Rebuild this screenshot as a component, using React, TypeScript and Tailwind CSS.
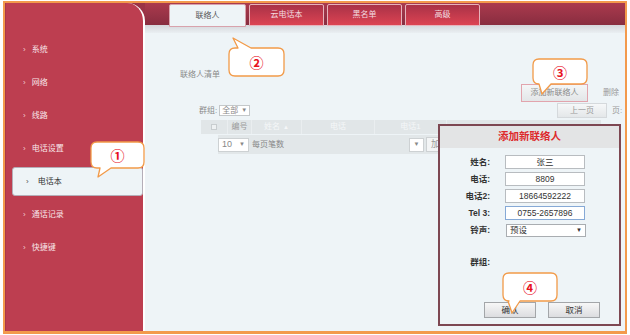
import React from 'react';

const menu = ['系统', '网络', '线路', '电话设置', '电话本', '通话记录', '快捷键'];
const tabs = ['联络人', '云电话本', '黑名单', '高级'];

const fields = [
  { label: '姓名:', value: '张三' },
  { label: '电话:', value: '8809' },
  { label: '电话2:', value: '18664592222' },
  { label: 'Tel 3:', value: '0755-2657896', focus: true },
];

function bubblePath(w: number, h: number, r: number, side: 'top' | 'bottom', b1: number, b2: number, tx: number, ty: number) {
  if (side === 'bottom')
    return `M${r},0 H${w - r} Q${w},0 ${w},${r} V${h - r} Q${w},${h} ${w - r},${h} H${b2} L${tx},${ty} L${b1},${h} H${r} Q0,${h} 0,${h - r} V${r} Q0,0 ${r},0 Z`;
  return `M${r},0 H${b1} L${tx},${ty} L${b2},0 H${w - r} Q${w},0 ${w},${r} V${h - r} Q${w},${h} ${w - r},${h} H${r} Q0,${h} 0,${h - r} V${r} Q0,0 ${r},0 Z`;
}

function Callout({ className, n, d }: { className: string; n: string; d: string }) {
  return (
    <div className={`absolute z-30 flex items-center justify-center ${className}`}>
      <svg className="absolute inset-0 h-full w-full overflow-visible">
        <path d={d} fill="#fff" stroke="#f29a48" strokeWidth="1.3" strokeLinejoin="round" />
      </svg>
      <span className="relative text-[14px] font-bold leading-none text-[#e8101e] font-['Noto_Sans_CJK_SC',sans-serif]">{n}</span>
    </div>
  );
}

export default function App() {
  return (
    <div className="relative h-[335px] w-[630px] overflow-hidden bg-white pl-[3px] pt-[1px] text-[8px] font-['Liberation_Sans','Noto_Sans_CJK_SC',sans-serif]">
      <div className="flex h-[333px] w-[624px] overflow-hidden border-[2px] border-b-[3px] border-[#f39a4c]">
        {/* sidebar */}
        <div className="w-[140px] shrink-0 bg-[#9b3346]">
          <div className="h-full rounded-tr-[18px] border-l border-r-2 border-l-[#a8394a] border-r-white bg-[#bd3e50] pt-[30px]">
            {menu.map(item =>
              item === '电话本' ? (
                <div key={item} className="flex h-[33px] items-center">
                  <div className="ml-[6px] flex h-[29px] flex-1 items-center rounded-[3px] border border-[#b5aeb8] bg-[#eef4f7] pl-[13px] text-[#333]">
                    <span className="mr-[9px] text-[8px] text-[#555]">›</span>
                    <span>{item}</span>
                  </div>
                </div>
              ) : (
                <div key={item} className="flex h-[33px] items-center pl-[17px] text-[#f8e6e9]">
                  <span className="mr-[6px] text-[8px] text-[#f0c8cf]">›</span>
                  <span>{item}</span>
                </div>
              )
            )}
          </div>
        </div>

        {/* main column */}
        <div className="flex min-w-0 flex-1 flex-col bg-[#eef4f7]">
          <div className="h-[22px] shrink-0 bg-[linear-gradient(#ab3a4d,#882d40)]">
            <div className="relative z-10 flex gap-[3px] pl-[24px] pt-[1px]">
              {tabs.map((t, i) => (
                <div
                  key={t}
                  className={
                    i === 0
                      ? 'flex h-[23px] w-[77px] items-center justify-center rounded-t-[2px] border border-[#d8a2ac] bg-[#eef4f7] text-[#555]'
                      : 'flex h-[22px] w-[75px] items-center justify-center rounded-t-[2px] border border-[#e7b3bb] bg-[linear-gradient(#a93247,#dc4352)] text-[#f3dce0]'
                  }
                >
                  {t}
                </div>
              ))}
            </div>
          </div>
          <div className="h-[8px] shrink-0 bg-[linear-gradient(#d4d6db,#eaeff2)]" />

          <div className="min-w-0 flex-1">
            <div className="box-content h-[10px] pl-[35px] pt-[37px] leading-[10px] text-[#8a8a8a]">联络人清单</div>

            <div className="mt-[4px] flex h-[18px] items-center pl-[376px]">
              <div className="flex h-[18px] w-[67px] shrink-0 items-center justify-center border border-[#e2a4ad] bg-[linear-gradient(#f4f6f7,#e3e6e8)] text-[#8a8a8a]">
                添加新联络人
              </div>
              <div className="ml-[8px] flex h-[16px] w-[30px] shrink-0 items-center justify-center text-[#999]">删除</div>
            </div>

            <div className="mt-[1px] flex h-[15px] items-center">
              <div className="flex items-center pl-[54px]">
                <span className="text-[#8a8a8a]">群组:</span>
                <div className="ml-[2px] flex h-[11px] w-[31px] items-center justify-between border border-[#c4c8ca] bg-white px-[2px] text-[#888]">
                  <span>全部</span>
                  <span className="text-[6px]">▼</span>
                </div>
              </div>
              <div className="ml-auto flex items-center">
                <div className="flex h-[15px] w-[50px] items-center justify-center border border-[#d5d9dc] bg-[linear-gradient(#f6f8f9,#e4e7e9)] text-[#999]">
                  上一页
                </div>
                <span className="w-[18px] pl-[5px] text-[#999]">页:</span>
              </div>
            </div>

            <div className="ml-[56px] mt-[2px] flex h-[14px] w-[400px] items-center bg-[#e1e6e8] text-[#f5f7f8]">
              <div className="flex h-full w-[27px] items-center justify-center border-r border-[#eaeef0]">
                <div className="h-[6px] w-[6px] border border-[#c8cdcf] bg-[#eef1f2]" />
              </div>
              <div className="flex h-full w-[24px] items-center justify-center border-r border-[#eaeef0] text-[#9a9a9a]">编号</div>
              <div className="flex h-full w-[50px] items-center justify-center border-r border-[#eaeef0]">
                姓名 <span className="ml-[3px] text-[6px]">▲</span>
              </div>
              <div className="flex h-full w-[73px] items-center justify-center border-r border-[#eaeef0]">电话</div>
              <div className="flex h-full w-[72px] items-center justify-center border-r border-[#eaeef0]">电话1</div>
            </div>

            <div className="ml-[73px] mt-[1px] flex h-[19px] w-[300px] items-center bg-[#e2e7e9] text-[#888]">
              <div className="flex h-[14px] w-[31px] items-center justify-between border border-[#cdd1d3] bg-white px-[3px]">
                <span className="text-[9px]">10</span>
                <span className="text-[6px]">▼</span>
              </div>
              <span className="ml-[3px]">每页笔数</span>
              <div className="ml-auto mr-[2px] flex h-[14px] w-[15px] items-center justify-center border border-[#cdd1d3] bg-white text-[6px]">▼</div>
              <div className="mr-[62px] flex h-[15px] w-[30px] items-center border border-[#cdd1d3] bg-[#f3f5f6] pl-[4px] text-[9px] text-[#999]">加入</div>
            </div>
          </div>
        </div>
      </div>

      {/* dialog */}
      <div className="absolute left-[438px] top-[124px] z-20 flex h-[202px] w-[183px] flex-col border-2 border-[#7d4752] bg-[#eef4f7]">
        <div className="flex h-[22px] shrink-0 items-center justify-center bg-[#e3e4e5] text-[10.5px] font-bold text-[#dd2a2c]">
          添加新联络人
        </div>
        <div className="flex flex-col gap-[3px] pt-[7px]">
          {fields.map(f => (
            <div key={f.label} className="flex h-[14px] items-center">
              <span className="w-[50px] text-right text-[8.5px] font-bold text-[#333]">{f.label}</span>
              <div
                className={
                  f.focus
                    ? 'ml-[15px] flex h-[14px] w-[80px] items-center justify-center border border-[#86a9d6] bg-white text-[8.5px] text-[#333]'
                    : 'ml-[15px] flex h-[14px] w-[80px] items-center justify-center border border-[#b8bcc0] bg-white text-[8.5px] text-[#333]'
                }
              >
                {f.value}
              </div>
            </div>
          ))}
          <div className="flex h-[14px] items-center">
            <span className="w-[50px] text-right text-[8.5px] font-bold text-[#333]">铃声:</span>
            <div className="ml-[16px] flex h-[13px] w-[80px] items-center justify-between border border-[#a9adb1] bg-white px-[3px] text-[8.5px] text-[#333]">
              <span>预设</span>
              <span className="text-[6px]">▼</span>
            </div>
          </div>
        </div>
        <div className="mt-[19px] flex h-[12px] items-center">
          <span className="w-[50px] text-right text-[8.5px] font-bold text-[#333]">群组:</span>
        </div>
        <div className="mt-[34px] flex gap-[12px] pl-[44px]">
          <div className="flex h-[16px] w-[52px] items-center justify-center border border-[#a3a6a9] bg-[linear-gradient(#f7f7f7,#dcdde0)] text-[8.5px] text-[#333]">确认</div>
          <div className="flex h-[16px] w-[52px] items-center justify-center border border-[#a3a6a9] bg-[linear-gradient(#f7f7f7,#dcdde0)] text-[8.5px] text-[#333]">取消</div>
        </div>
      </div>

      <Callout className="left-[91px] top-[142px] h-[26px] w-[53px]" n="①" d={bubblePath(53, 26, 6, 'bottom', 9, 20, 7, 35)} />
      <Callout className="left-[229px] top-[48px] h-[28px] w-[55px]" n="②" d={bubblePath(55, 28, 6, 'top', 9, 22, 4, -10)} />
      <Callout className="left-[533px] top-[59px] h-[25px] w-[54px]" n="③" d={bubblePath(54, 25, 6, 'bottom', 6, 18, 9, 35)} />
      <Callout className="left-[503px] top-[273px] h-[28px] w-[54px]" n="④" d={bubblePath(54, 28, 6, 'bottom', 5, 17, 9, 40)} />
    </div>
  );
}
